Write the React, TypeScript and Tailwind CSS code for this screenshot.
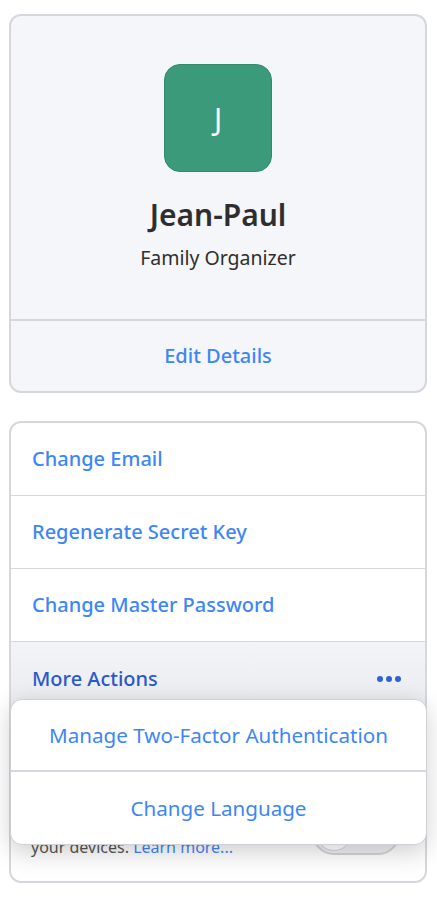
const font = { fontFamily: '"Noto Sans", "Open Sans", sans-serif' }

const ActionRow = ({ label }: { label: string }) => {
  return (
    <button className="flex h-[73px] w-full items-center border-b border-[#d6d7dd] px-[21px] text-left text-[20px] font-medium text-[#3d86f5]">
      {label}
    </button>
  )
}

export default function App() {
  return (
    <div className="min-h-screen bg-white pt-[14px] pr-[10px] pl-[9px]" style={font}>
      {/* profile card */}
      <div className="rounded-[12px] border-2 border-[#d6d7dd] bg-[#f5f6fa]">
        <div className="flex flex-col items-center pt-[48px] pb-[47px]">
          <div className="flex h-[108px] w-[108px] items-center justify-center rounded-[16px] border border-[#33896c] bg-[#3a9a7a] text-[30px] text-white">
            J
          </div>
          <h1 className="mt-[21px] text-[30px] font-semibold leading-[44px] text-[#2e2e2e]">Jean-Paul</h1>
          <p className="mt-[7px] text-[19.5px] leading-[28px] text-[#2e2e2e]">Family Organizer</p>
        </div>
        <div className="flex h-[72px] items-center justify-center border-t-2 border-[#d6d7dd]">
          <button className="text-[20px] font-medium text-[#3d86f5]">Edit Details</button>
        </div>
      </div>

      {/* account actions */}
      <div className="relative mt-[28px] rounded-[12px] border-2 border-[#d6d7dd] bg-white">
        <ActionRow label="Change Email" />
        <ActionRow label="Regenerate Secret Key" />
        <ActionRow label="Change Master Password" />
        <div className="relative">
          <div className="flex h-[73px] items-center justify-between bg-gradient-to-b from-[#f3f4f7] to-[#eaebef] px-[21px]">
            <span className="text-[20px] font-medium text-[#2b58cc]">More Actions</span>
            <span className="flex gap-[3px] pr-[3px]">
              <span className="h-[6px] w-[6px] rounded-full bg-[#2b62d9]" />
              <span className="h-[6px] w-[6px] rounded-full bg-[#2b62d9]" />
              <span className="h-[6px] w-[6px] rounded-full bg-[#2b62d9]" />
            </span>
          </div>

          {/* dropdown */}
          <div className="absolute top-[57px] -left-px -right-[2px] z-10 overflow-hidden rounded-[12px] border border-[#cfd0d6] bg-white shadow-[0_6px_24px_rgba(0,0,0,0.18)]">
            <button className="flex h-[72px] w-full items-center justify-center border-b-2 border-[#d6d7dd] text-[20.6px] text-[#3d86f5]">
              Manage Two-Factor Authentication
            </button>
            <button className="flex h-[72px] w-full items-center justify-center text-[20.6px] text-[#3d86f5]">
              Change Language
            </button>
          </div>
        </div>

        <div className="flex h-[166px] items-end justify-between rounded-b-[12px] bg-gradient-to-b from-[#ececef] to-white pr-[25px] pb-[21px] pl-[20px]">
          <p className="w-[250px] text-[16px] leading-[25px] text-[#555]">
            Sync these settings across all of your devices.{' '}
            <span className="text-[#3d86f5]">Learn more...</span>
          </p>
          <div className="mb-[5px] flex h-[44px] w-[88px] items-center rounded-full border-2 border-[#d0d1d7] bg-[#ededf0] px-[2px]">
            <span className="h-[36px] w-[36px] rounded-full border border-[#d0d1d7] bg-white" />
          </div>
        </div>
      </div>
    </div>
  )
}
